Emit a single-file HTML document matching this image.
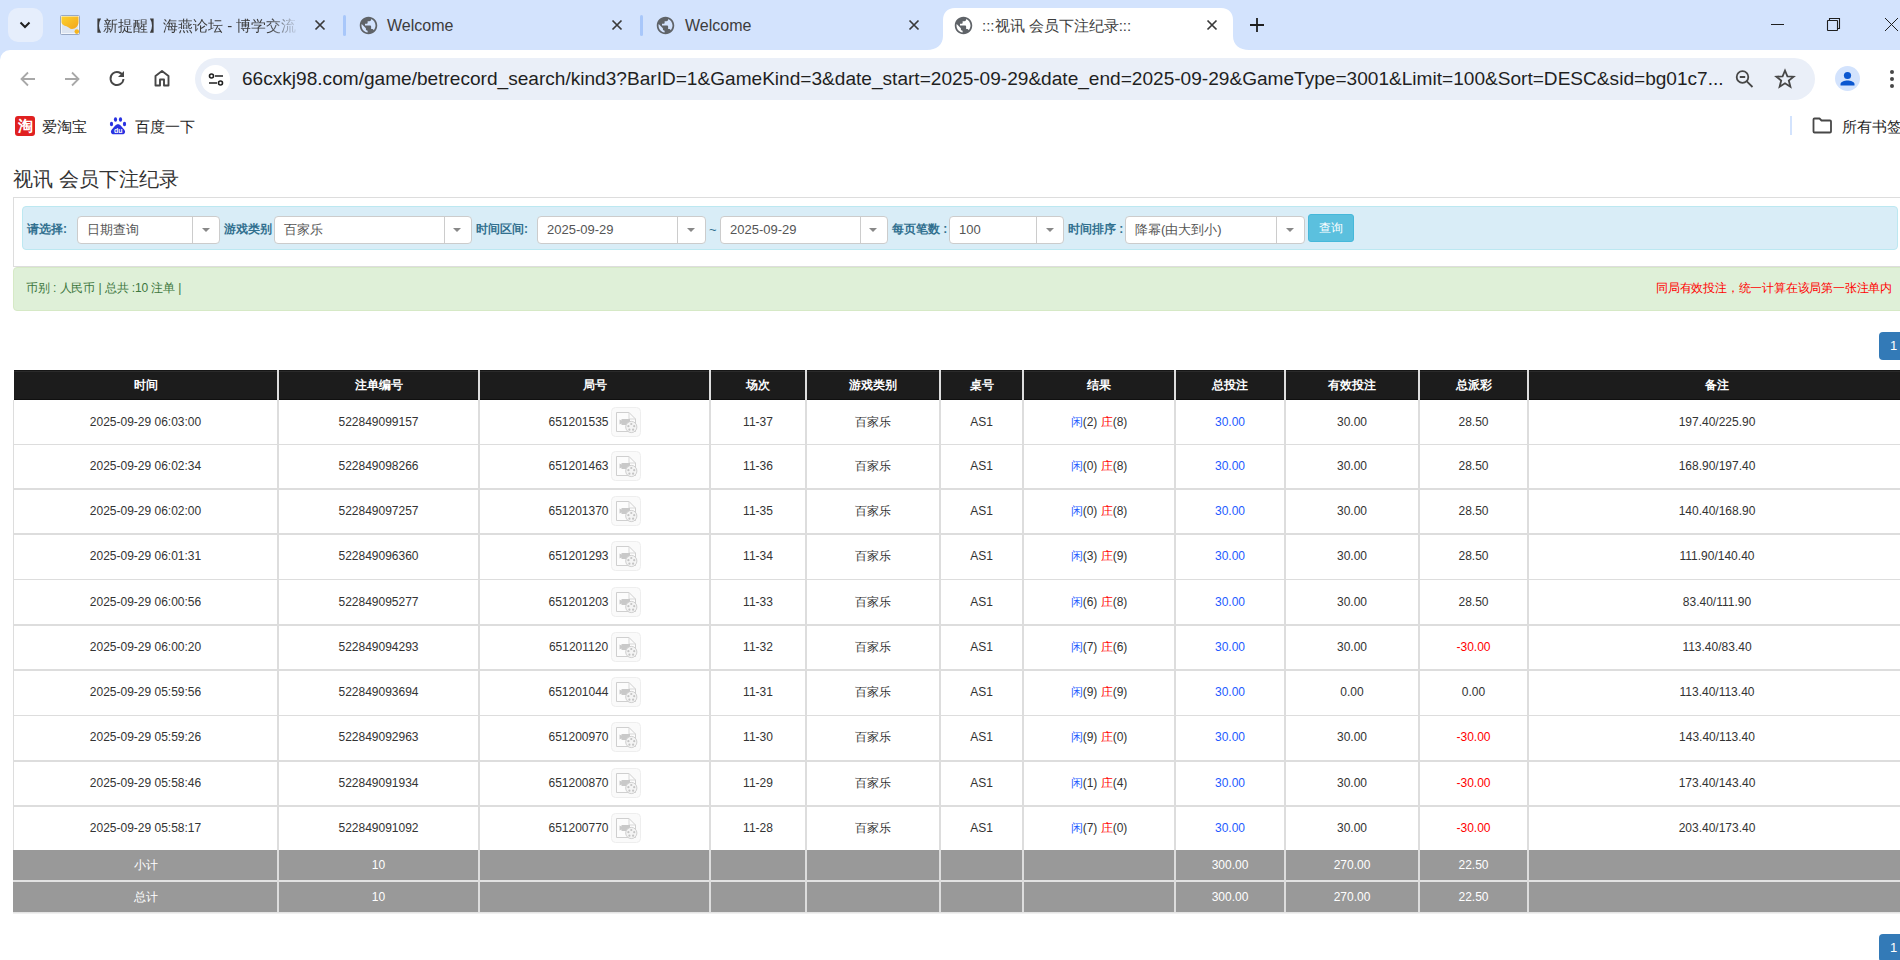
<!DOCTYPE html>
<html><head><meta charset="utf-8">
<style>
*{box-sizing:border-box;margin:0;padding:0}
html,body{width:1900px;height:960px;overflow:hidden;background:#fff;font-family:"Liberation Sans",sans-serif}
.a{position:absolute}
#tabs{left:0;top:0;width:1900px;height:62px;background:#d3e3fd}
#toolbar{left:0;top:50px;width:1900px;height:58px;background:#fff;border-top-left-radius:10px}
.tabt{font-size:16px;color:#3c3c3c;white-space:nowrap;top:16px;line-height:20px}
.sep{width:3px;height:21px;background:#a8c7fa;top:15px;border-radius:1.5px}
#omni{left:195px;top:58px;width:1620px;height:42px;border-radius:21px;background:#eaeff8}
#url{left:242px;top:67px;font-size:19.08px;line-height:24px;color:#1f1f1f;white-space:nowrap}
#bm{left:0;top:108px;width:1900px;height:37px}
.bmt{font-size:15px;color:#1f1f1f;top:117px;line-height:20px;white-space:nowrap}
</style></head><body>
<!-- TAB STRIP -->
<div id="tabs" class="a"></div>
<div class="a" style="left:8px;top:8px;width:35px;height:34px;border-radius:10px;background:#e6eefc"></div>
<svg class="a" style="left:17px;top:17px" width="16" height="16" viewBox="0 0 16 16"><path d="M3.5 5.5 8 10l4.5-4.5" fill="none" stroke="#1f1f1f" stroke-width="2"/></svg>
<!-- tab1 -->
<svg class="a" style="left:60px;top:15px" width="20" height="20" viewBox="0 0 20 20"><defs><linearGradient id="fy" x1="0" y1="0" x2="1" y2="1"><stop offset="0" stop-color="#fcd22e"/><stop offset="1" stop-color="#f2a51e"/></linearGradient></defs><rect x="0.5" y="0.5" width="19" height="19" rx="1" fill="#dde5f1" stroke="#98a9c5"/><rect x="1.5" y="1.5" width="17" height="17" fill="none" stroke="#f3f6fb"/><path d="M1.5 1.5H18.5V7C18.5 11 15.5 14 12 14 9.5 14 8.5 12 6.5 11.3 4 10.5 1.5 9.5 1.5 7z" fill="url(#fy)"/><circle cx="16.8" cy="16.6" r="2.3" fill="#f6b51f"/></svg>
<div class="a tabt" style="left:88px;width:212px;font-size:15px;overflow:hidden;-webkit-mask-image:linear-gradient(90deg,#000 85%,transparent)">【新提醒】海燕论坛 - 博学交流</div>
<svg class="a" style="left:313px;top:18px" width="14" height="14" viewBox="0 0 14 14"><path d="M2.5 2.5 11.5 11.5M11.5 2.5 2.5 11.5" stroke="#3a3a3a" stroke-width="1.7"/></svg>
<div class="a sep" style="left:343px"></div>
<!-- tab2 -->
<svg class="a" style="left:357.5px;top:14.5px" width="21" height="21" viewBox="0 0 24 24"><path d="M12 2C6.48 2 2 6.48 2 12s4.48 10 10 10 10-4.48 10-10S17.52 2 12 2zm-1 17.93c-3.95-.49-7-3.85-7-7.93 0-.62.08-1.21.21-1.79L9 15v1c0 1.1.9 2 2 2v1.93zm6.9-2.54c-.26-.81-1-1.39-1.9-1.39h-1v-3c0-.55-.45-1-1-1H8v-2h2c.55 0 1-.45 1-1V7h2c1.1 0 2-.9 2-2v-.41c2.93 1.19 5 4.06 5 7.41 0 2.08-.8 3.97-2.1 5.39z" fill="#5f6368"/></svg>
<div class="a tabt" style="left:387px">Welcome</div>
<svg class="a" style="left:610px;top:18px" width="14" height="14" viewBox="0 0 14 14"><path d="M2.5 2.5 11.5 11.5M11.5 2.5 2.5 11.5" stroke="#3a3a3a" stroke-width="1.7"/></svg>
<div class="a sep" style="left:640px"></div>
<!-- tab3 -->
<svg class="a" style="left:654.5px;top:14.5px" width="21" height="21" viewBox="0 0 24 24"><path d="M12 2C6.48 2 2 6.48 2 12s4.48 10 10 10 10-4.48 10-10S17.52 2 12 2zm-1 17.93c-3.95-.49-7-3.85-7-7.93 0-.62.08-1.21.21-1.79L9 15v1c0 1.1.9 2 2 2v1.93zm6.9-2.54c-.26-.81-1-1.39-1.9-1.39h-1v-3c0-.55-.45-1-1-1H8v-2h2c.55 0 1-.45 1-1V7h2c1.1 0 2-.9 2-2v-.41c2.93 1.19 5 4.06 5 7.41 0 2.08-.8 3.97-2.1 5.39z" fill="#5f6368"/></svg>
<div class="a tabt" style="left:685px">Welcome</div>
<svg class="a" style="left:907px;top:18px" width="14" height="14" viewBox="0 0 14 14"><path d="M2.5 2.5 11.5 11.5M11.5 2.5 2.5 11.5" stroke="#3a3a3a" stroke-width="1.7"/></svg>
<!-- active tab -->
<svg class="a" style="left:927px;top:8px" width="322" height="42" viewBox="0 0 322 42"><path d="M0 42c9 0 16-5 16-14V12C16 5 20 0 28 0h266c8 0 12 5 12 12v16c0 9 7 14 16 14z" fill="#fff"/></svg>
<svg class="a" style="left:952.5px;top:14.5px" width="21" height="21" viewBox="0 0 24 24"><path d="M12 2C6.48 2 2 6.48 2 12s4.48 10 10 10 10-4.48 10-10S17.52 2 12 2zm-1 17.93c-3.95-.49-7-3.85-7-7.93 0-.62.08-1.21.21-1.79L9 15v1c0 1.1.9 2 2 2v1.93zm6.9-2.54c-.26-.81-1-1.39-1.9-1.39h-1v-3c0-.55-.45-1-1-1H8v-2h2c.55 0 1-.45 1-1V7h2c1.1 0 2-.9 2-2v-.41c2.93 1.19 5 4.06 5 7.41 0 2.08-.8 3.97-2.1 5.39z" fill="#5f6368"/></svg>
<div class="a tabt" style="left:982px;font-size:15px">:::视讯 会员下注纪录:::</div>
<svg class="a" style="left:1205px;top:18px" width="14" height="14" viewBox="0 0 14 14"><path d="M2.5 2.5 11.5 11.5M11.5 2.5 2.5 11.5" stroke="#3a3a3a" stroke-width="1.7"/></svg>
<svg class="a" style="left:1249px;top:17px" width="16" height="16" viewBox="0 0 16 16"><path d="M8 1v14M1 8h14" stroke="#1f1f1f" stroke-width="1.8"/></svg>
<!-- window controls -->
<div class="a" style="left:1771px;top:24px;width:13px;height:1px;background:#1f1f1f"></div>
<svg class="a" style="left:1826px;top:17px" width="16" height="16" viewBox="0 0 16 16"><rect x="1.5" y="3.5" width="10" height="10" rx="0.5" fill="none" stroke="#1f1f1f" stroke-width="1.1"/><path d="M3.5 3.5V1.5h10v10h-2" fill="none" stroke="#1f1f1f" stroke-width="1.1"/></svg>
<svg class="a" style="left:1884px;top:17px" width="15" height="15" viewBox="0 0 15 15"><path d="M1 1 14 14M14 1 1 14" stroke="#1f1f1f" stroke-width="1"/></svg>

<!-- TOOLBAR -->
<div id="toolbar" class="a"></div>
<svg class="a" style="left:18px;top:69px" width="20" height="20" viewBox="0 0 20 20"><path d="M17 10H4M10 3.5 3.5 10 10 16.5" fill="none" stroke="#a8a8a8" stroke-width="1.8"/></svg>
<svg class="a" style="left:62px;top:69px" width="20" height="20" viewBox="0 0 20 20"><path d="M3 10h13M10 3.5 16.5 10 10 16.5" fill="none" stroke="#a8a8a8" stroke-width="1.8"/></svg>
<svg class="a" style="left:107px;top:68px" width="20" height="20" viewBox="0 0 20 20"><path d="M16.2 8.5A6.5 6.5 0 1 0 16.5 11" fill="none" stroke="#474747" stroke-width="1.9"/><path d="M17 3v6h-6z" fill="#474747"/></svg>
<svg class="a" style="left:152px;top:68px" width="20" height="20" viewBox="0 0 20 20"><path d="M3.5 17.5V8L10 3l6.5 5v9.5h-4.5v-6h-4v6z" fill="none" stroke="#474747" stroke-width="1.9" stroke-linejoin="round"/></svg>
<div id="omni" class="a"></div>
<div class="a" style="left:201px;top:65px;width:29px;height:29px;border-radius:50%;background:#fff"></div>
<svg class="a" style="left:207px;top:71px" width="18" height="18" viewBox="0 0 18 18"><circle cx="4.5" cy="5" r="2" fill="none" stroke="#1f1f1f" stroke-width="1.6"/><path d="M8 5h8M2 12h8" stroke="#1f1f1f" stroke-width="1.6"/><circle cx="13.5" cy="12" r="2" fill="none" stroke="#1f1f1f" stroke-width="1.6"/></svg>
<div id="url" class="a">66cxkj98.com/game/betrecord_search/kind3?BarID=1&amp;GameKind=3&amp;date_start=2025-09-29&amp;date_end=2025-09-29&amp;GameType=3001&amp;Limit=100&amp;Sort=DESC&amp;sid=bg01c7...</div>
<svg class="a" style="left:1735px;top:69px" width="20" height="20" viewBox="0 0 20 20"><circle cx="7.5" cy="8" r="5.8" fill="none" stroke="#474747" stroke-width="1.8"/><path d="M4.8 8h5.4M11.8 12.3 17.5 18" stroke="#474747" stroke-width="1.8"/></svg>
<svg class="a" style="left:1774px;top:68px" width="22" height="22" viewBox="0 0 22 22"><path d="M11 2.5 13.4 8.3 19.6 8.7 14.8 12.6 16.4 18.7 11 15.3 5.6 18.7 7.2 12.6 2.4 8.7 8.6 8.3z" fill="none" stroke="#474747" stroke-width="1.8" stroke-linejoin="miter"/></svg>
<div class="a" style="left:1835px;top:66px;width:25px;height:25px;border-radius:50%;background:#d3e3fd"></div>
<svg class="a" style="left:1835px;top:66px" width="25" height="25" viewBox="0 0 25 25"><circle cx="12.5" cy="9.5" r="3.6" fill="#0b57d0"/><path d="M5.5 19.5v-1.5c0-2 4-3.4 7-3.4s7 1.4 7 3.4v1.5z" fill="#0b57d0"/></svg>
<div class="a" style="left:1890px;top:70px;width:4px;height:4px;border-radius:50%;background:#474747"></div>
<div class="a" style="left:1890px;top:77px;width:4px;height:4px;border-radius:50%;background:#474747"></div>
<div class="a" style="left:1890px;top:84px;width:4px;height:4px;border-radius:50%;background:#474747"></div>

<!-- BOOKMARKS -->
<div class="a" style="left:15px;top:116px;width:20px;height:20px;border-radius:3px;background:#e02020;color:#fff;font-size:15px;line-height:20px;text-align:center;font-weight:bold">淘</div>
<div class="a bmt" style="left:42px">爱淘宝</div>
<svg class="a" style="left:109px;top:116px" width="18" height="19" viewBox="0 0 18 19"><ellipse cx="6.5" cy="3.5" rx="1.6" ry="2.2" fill="#2932e1"/><ellipse cx="11.5" cy="3.5" rx="1.6" ry="2.2" fill="#2932e1"/><ellipse cx="2.5" cy="8" rx="1.6" ry="2.2" fill="#2932e1"/><ellipse cx="15.5" cy="8" rx="1.6" ry="2.2" fill="#2932e1"/><path d="M9 8.3c-2.6 0-3.6 2.6-5.2 4.1-1.2 1.1-1.9 2.2-1.9 3.3 0 1.6 1.3 2.6 3 2.6h8.2c1.7 0 3-1 3-2.6 0-1.1-.7-2.2-1.9-3.3-1.6-1.5-2.6-4.1-5.2-4.1z" fill="#2932e1"/><text x="9.2" y="17" font-size="7" font-weight="bold" fill="#fff" text-anchor="middle" font-family="Liberation Sans">du</text></svg>
<div class="a bmt" style="left:135px">百度一下</div>
<div class="a" style="left:1790px;top:116px;width:2px;height:19px;background:#d3e3fd"></div>
<svg class="a" style="left:1812px;top:117px" width="21" height="17" viewBox="0 0 21 17"><path d="M1.5 2.5c0-.6.4-1 1-1h5l2 2h8.5c.6 0 1 .4 1 1v10c0 .6-.4 1-1 1h-15.5c-.6 0-1-.4-1-1z" fill="none" stroke="#474747" stroke-width="1.8" stroke-linejoin="round"/></svg>
<div class="a bmt" style="left:1842px">所有书签</div>



<style>
.t{position:absolute;white-space:nowrap}
#ttl{left:13px;top:166px;font-size:20px;line-height:26px;color:#333}
.lab{font-size:12px;font-weight:bold;color:#31708f;line-height:14px;top:222px}
.sel{position:absolute;top:216px;height:28px;background:#fff;border:1px solid #ccc;border-radius:4px}
.sel .dv{position:absolute;top:0;bottom:0;width:1px;background:#ccc}
.sel .car{position:absolute;top:11px;width:0;height:0;border-left:4px solid transparent;border-right:4px solid transparent;border-top:4px solid #888}
.sel .v{position:absolute;top:5px;font-size:13px;line-height:15px;color:#555;white-space:nowrap}
.hd{font-size:12px;font-weight:bold;color:#fff;line-height:14px;text-align:center}
.cell{font-size:12px;color:#333;line-height:14px;text-align:center}
.ft{font-size:12px;color:#fff;line-height:14px;text-align:center}
.hl{position:absolute;left:13px;width:1892px;background:#ddd}
.vl{position:absolute;width:2px;background:#ddd}
.blue{color:#1e5bff}
.red{color:#f00}
.vid{position:absolute;width:29px;height:29px;border:1px solid #eee;border-radius:4px;background:#fafafa}
.pg{position:absolute;left:1879px;width:30px;height:28px;background:#337ab7;border-radius:4px 0 0 4px;color:#fff;font-size:13px;line-height:28px;padding-left:11px}
</style>

<div class="t" id="ttl">视讯 会员下注纪录</div>
<div class="a" style="left:13px;top:197px;width:1900px;height:70px;border:1px solid #ddd;border-right:none"></div>
<div class="a" style="left:22px;top:206px;width:1876px;height:44px;background:#d9edf7;border:1px solid #bce8f1;border-radius:4px"></div>
<div class="t lab" style="left:27px">请选择:</div>
<div class="t lab" style="left:224px">游戏类别</div>
<div class="t lab" style="left:476px">时间区间:</div>
<div class="t lab" style="left:892px">每页笔数 :</div>
<div class="t lab" style="left:1068px">时间排序 :</div>
<div class="t" style="left:709px;top:222px;font-size:13px;color:#31708f;line-height:15px">~</div>
<div class="sel" style="left:77px;width:143px"><div class="v" style="left:9px">日期查询</div><div class="dv" style="left:114px"></div><div class="car" style="left:124px"></div></div>
<div class="sel" style="left:274px;width:198px"><div class="v" style="left:9px">百家乐</div><div class="dv" style="left:169px"></div><div class="car" style="left:178px"></div></div>
<div class="sel" style="left:537px;width:169px"><div class="v" style="left:9px">2025-09-29</div><div class="dv" style="left:139px"></div><div class="car" style="left:149px"></div></div>
<div class="sel" style="left:720px;width:168px"><div class="v" style="left:9px">2025-09-29</div><div class="dv" style="left:139px"></div><div class="car" style="left:148px"></div></div>
<div class="sel" style="left:949px;width:115px"><div class="v" style="left:9px">100</div><div class="dv" style="left:86px"></div><div class="car" style="left:96px"></div></div>
<div class="sel" style="left:1125px;width:180px"><div class="v" style="left:9px">降幂(由大到小)</div><div class="dv" style="left:150px"></div><div class="car" style="left:160px"></div></div>
<div class="a" style="left:1308px;top:214px;width:46px;height:28px;background:#5bc0de;border:1px solid #46b8da;border-radius:3px;color:#fff;font-size:12px;line-height:26px;text-align:center">查询</div>
<div class="a" style="left:13px;top:267px;width:1900px;height:44px;background:#dff0d8;border:1px solid #d6e9c6;border-radius:4px"></div>
<div class="t" style="left:26px;top:281px;font-size:12px;letter-spacing:-0.1px;line-height:14px;color:#3c763d">币别 : 人民币 | 总共 :10 注单 |</div>
<div class="t" style="left:1656px;top:281px;font-size:12px;letter-spacing:-0.2px;line-height:14px;color:#f00">同局有效投注，统一计算在该局第一张注单内</div>
<div class="pg" style="top:332px">1</div>
<div class="a" style="left:14px;top:370px;width:1891px;height:30px;background:#1c1c1c;border-top:1px solid #161616;border-bottom:1px solid #101010"></div>
<div class="a" style="left:14px;top:371px;width:1891px;height:1px;background:#2a2a2a"></div>
<div class="t hd" style="left:14px;width:263px;top:378px">时间</div>
<div class="t hd" style="left:279px;width:199px;top:378px">注单编号</div>
<div class="t hd" style="left:480px;width:229px;top:378px">局号</div>
<div class="t hd" style="left:711px;width:94px;top:378px">场次</div>
<div class="t hd" style="left:807px;width:132px;top:378px">游戏类别</div>
<div class="t hd" style="left:941px;width:81px;top:378px">桌号</div>
<div class="t hd" style="left:1024px;width:150px;top:378px">结果</div>
<div class="t hd" style="left:1176px;width:108px;top:378px">总投注</div>
<div class="t hd" style="left:1286px;width:132px;top:378px">有效投注</div>
<div class="t hd" style="left:1420px;width:107px;top:378px">总派彩</div>
<div class="t hd" style="left:1529px;width:376px;top:378px">备注</div>
<div class="hl" style="top:444px;height:1px"></div>
<div class="hl" style="top:488px;height:2px"></div>
<div class="hl" style="top:533px;height:2px"></div>
<div class="hl" style="top:579px;height:1px"></div>
<div class="hl" style="top:624px;height:2px"></div>
<div class="hl" style="top:669px;height:2px"></div>
<div class="hl" style="top:715px;height:1px"></div>
<div class="hl" style="top:760px;height:2px"></div>
<div class="hl" style="top:805px;height:2px"></div>
<div class="a" style="left:13px;top:400px;width:1px;height:450px;background:#ddd"></div>
<div class="t cell" style="left:14px;width:263px;top:415px">2025-09-29 06:03:00</div>
<div class="t cell" style="left:279px;width:199px;top:415px">522849099157</div>
<div class="t cell" style="left:480px;width:229px;top:415px;padding-right:32px">651201535</div>
<svg class="a" style="left:611px;top:407px" width="30" height="30" viewBox="0 0 30 30"><rect x="0.5" y="0.5" width="29" height="29" rx="4" fill="#fafafa" stroke="#eee"/><path d="M5.5 5.5h12.5l6.5 6.5v12.5h-19z" fill="#fcfcfc" stroke="#cfcfcf"/><path d="M18 5.5v6.5h6.5" fill="none" stroke="#d8d8d8"/><path d="M8.5 12.5l2 1v-1.5h8.5v6h-8.5v-1.5l-2 1z" fill="#c9c9c9"/><circle cx="20.3" cy="20" r="5.6" fill="#f4f4f4" stroke="#cfcfcf"/><circle cx="20.3" cy="17" r="1.1" fill="#c4c4c4"/><circle cx="23.2" cy="19.2" r="1.1" fill="#c4c4c4"/><circle cx="22.1" cy="22.7" r="1.1" fill="#c4c4c4"/><circle cx="18.4" cy="22.7" r="1.1" fill="#c4c4c4"/><circle cx="17.4" cy="19.2" r="1.1" fill="#c4c4c4"/></svg>
<div class="t cell" style="left:711px;width:94px;top:415px">11-37</div>
<div class="t cell" style="left:807px;width:132px;top:415px">百家乐</div>
<div class="t cell" style="left:941px;width:81px;top:415px">AS1</div>
<div class="t cell" style="left:1024px;width:150px;top:415px"><span class="blue">闲</span>(2) <span class="red">庄</span>(8)</div>
<div class="t cell" style="left:1176px;width:108px;top:415px"><span class="blue">30.00</span></div>
<div class="t cell" style="left:1286px;width:132px;top:415px">30.00</div>
<div class="t cell" style="left:1420px;width:107px;top:415px">28.50</div>
<div class="t cell" style="left:1529px;width:376px;top:415px">197.40/225.90</div>
<div class="t cell" style="left:14px;width:263px;top:459px">2025-09-29 06:02:34</div>
<div class="t cell" style="left:279px;width:199px;top:459px">522849098266</div>
<div class="t cell" style="left:480px;width:229px;top:459px;padding-right:32px">651201463</div>
<svg class="a" style="left:611px;top:451px" width="30" height="30" viewBox="0 0 30 30"><rect x="0.5" y="0.5" width="29" height="29" rx="4" fill="#fafafa" stroke="#eee"/><path d="M5.5 5.5h12.5l6.5 6.5v12.5h-19z" fill="#fcfcfc" stroke="#cfcfcf"/><path d="M18 5.5v6.5h6.5" fill="none" stroke="#d8d8d8"/><path d="M8.5 12.5l2 1v-1.5h8.5v6h-8.5v-1.5l-2 1z" fill="#c9c9c9"/><circle cx="20.3" cy="20" r="5.6" fill="#f4f4f4" stroke="#cfcfcf"/><circle cx="20.3" cy="17" r="1.1" fill="#c4c4c4"/><circle cx="23.2" cy="19.2" r="1.1" fill="#c4c4c4"/><circle cx="22.1" cy="22.7" r="1.1" fill="#c4c4c4"/><circle cx="18.4" cy="22.7" r="1.1" fill="#c4c4c4"/><circle cx="17.4" cy="19.2" r="1.1" fill="#c4c4c4"/></svg>
<div class="t cell" style="left:711px;width:94px;top:459px">11-36</div>
<div class="t cell" style="left:807px;width:132px;top:459px">百家乐</div>
<div class="t cell" style="left:941px;width:81px;top:459px">AS1</div>
<div class="t cell" style="left:1024px;width:150px;top:459px"><span class="blue">闲</span>(0) <span class="red">庄</span>(8)</div>
<div class="t cell" style="left:1176px;width:108px;top:459px"><span class="blue">30.00</span></div>
<div class="t cell" style="left:1286px;width:132px;top:459px">30.00</div>
<div class="t cell" style="left:1420px;width:107px;top:459px">28.50</div>
<div class="t cell" style="left:1529px;width:376px;top:459px">168.90/197.40</div>
<div class="t cell" style="left:14px;width:263px;top:504px">2025-09-29 06:02:00</div>
<div class="t cell" style="left:279px;width:199px;top:504px">522849097257</div>
<div class="t cell" style="left:480px;width:229px;top:504px;padding-right:32px">651201370</div>
<svg class="a" style="left:611px;top:496px" width="30" height="30" viewBox="0 0 30 30"><rect x="0.5" y="0.5" width="29" height="29" rx="4" fill="#fafafa" stroke="#eee"/><path d="M5.5 5.5h12.5l6.5 6.5v12.5h-19z" fill="#fcfcfc" stroke="#cfcfcf"/><path d="M18 5.5v6.5h6.5" fill="none" stroke="#d8d8d8"/><path d="M8.5 12.5l2 1v-1.5h8.5v6h-8.5v-1.5l-2 1z" fill="#c9c9c9"/><circle cx="20.3" cy="20" r="5.6" fill="#f4f4f4" stroke="#cfcfcf"/><circle cx="20.3" cy="17" r="1.1" fill="#c4c4c4"/><circle cx="23.2" cy="19.2" r="1.1" fill="#c4c4c4"/><circle cx="22.1" cy="22.7" r="1.1" fill="#c4c4c4"/><circle cx="18.4" cy="22.7" r="1.1" fill="#c4c4c4"/><circle cx="17.4" cy="19.2" r="1.1" fill="#c4c4c4"/></svg>
<div class="t cell" style="left:711px;width:94px;top:504px">11-35</div>
<div class="t cell" style="left:807px;width:132px;top:504px">百家乐</div>
<div class="t cell" style="left:941px;width:81px;top:504px">AS1</div>
<div class="t cell" style="left:1024px;width:150px;top:504px"><span class="blue">闲</span>(0) <span class="red">庄</span>(8)</div>
<div class="t cell" style="left:1176px;width:108px;top:504px"><span class="blue">30.00</span></div>
<div class="t cell" style="left:1286px;width:132px;top:504px">30.00</div>
<div class="t cell" style="left:1420px;width:107px;top:504px">28.50</div>
<div class="t cell" style="left:1529px;width:376px;top:504px">140.40/168.90</div>
<div class="t cell" style="left:14px;width:263px;top:549px">2025-09-29 06:01:31</div>
<div class="t cell" style="left:279px;width:199px;top:549px">522849096360</div>
<div class="t cell" style="left:480px;width:229px;top:549px;padding-right:32px">651201293</div>
<svg class="a" style="left:611px;top:541px" width="30" height="30" viewBox="0 0 30 30"><rect x="0.5" y="0.5" width="29" height="29" rx="4" fill="#fafafa" stroke="#eee"/><path d="M5.5 5.5h12.5l6.5 6.5v12.5h-19z" fill="#fcfcfc" stroke="#cfcfcf"/><path d="M18 5.5v6.5h6.5" fill="none" stroke="#d8d8d8"/><path d="M8.5 12.5l2 1v-1.5h8.5v6h-8.5v-1.5l-2 1z" fill="#c9c9c9"/><circle cx="20.3" cy="20" r="5.6" fill="#f4f4f4" stroke="#cfcfcf"/><circle cx="20.3" cy="17" r="1.1" fill="#c4c4c4"/><circle cx="23.2" cy="19.2" r="1.1" fill="#c4c4c4"/><circle cx="22.1" cy="22.7" r="1.1" fill="#c4c4c4"/><circle cx="18.4" cy="22.7" r="1.1" fill="#c4c4c4"/><circle cx="17.4" cy="19.2" r="1.1" fill="#c4c4c4"/></svg>
<div class="t cell" style="left:711px;width:94px;top:549px">11-34</div>
<div class="t cell" style="left:807px;width:132px;top:549px">百家乐</div>
<div class="t cell" style="left:941px;width:81px;top:549px">AS1</div>
<div class="t cell" style="left:1024px;width:150px;top:549px"><span class="blue">闲</span>(3) <span class="red">庄</span>(9)</div>
<div class="t cell" style="left:1176px;width:108px;top:549px"><span class="blue">30.00</span></div>
<div class="t cell" style="left:1286px;width:132px;top:549px">30.00</div>
<div class="t cell" style="left:1420px;width:107px;top:549px">28.50</div>
<div class="t cell" style="left:1529px;width:376px;top:549px">111.90/140.40</div>
<div class="t cell" style="left:14px;width:263px;top:595px">2025-09-29 06:00:56</div>
<div class="t cell" style="left:279px;width:199px;top:595px">522849095277</div>
<div class="t cell" style="left:480px;width:229px;top:595px;padding-right:32px">651201203</div>
<svg class="a" style="left:611px;top:587px" width="30" height="30" viewBox="0 0 30 30"><rect x="0.5" y="0.5" width="29" height="29" rx="4" fill="#fafafa" stroke="#eee"/><path d="M5.5 5.5h12.5l6.5 6.5v12.5h-19z" fill="#fcfcfc" stroke="#cfcfcf"/><path d="M18 5.5v6.5h6.5" fill="none" stroke="#d8d8d8"/><path d="M8.5 12.5l2 1v-1.5h8.5v6h-8.5v-1.5l-2 1z" fill="#c9c9c9"/><circle cx="20.3" cy="20" r="5.6" fill="#f4f4f4" stroke="#cfcfcf"/><circle cx="20.3" cy="17" r="1.1" fill="#c4c4c4"/><circle cx="23.2" cy="19.2" r="1.1" fill="#c4c4c4"/><circle cx="22.1" cy="22.7" r="1.1" fill="#c4c4c4"/><circle cx="18.4" cy="22.7" r="1.1" fill="#c4c4c4"/><circle cx="17.4" cy="19.2" r="1.1" fill="#c4c4c4"/></svg>
<div class="t cell" style="left:711px;width:94px;top:595px">11-33</div>
<div class="t cell" style="left:807px;width:132px;top:595px">百家乐</div>
<div class="t cell" style="left:941px;width:81px;top:595px">AS1</div>
<div class="t cell" style="left:1024px;width:150px;top:595px"><span class="blue">闲</span>(6) <span class="red">庄</span>(8)</div>
<div class="t cell" style="left:1176px;width:108px;top:595px"><span class="blue">30.00</span></div>
<div class="t cell" style="left:1286px;width:132px;top:595px">30.00</div>
<div class="t cell" style="left:1420px;width:107px;top:595px">28.50</div>
<div class="t cell" style="left:1529px;width:376px;top:595px">83.40/111.90</div>
<div class="t cell" style="left:14px;width:263px;top:640px">2025-09-29 06:00:20</div>
<div class="t cell" style="left:279px;width:199px;top:640px">522849094293</div>
<div class="t cell" style="left:480px;width:229px;top:640px;padding-right:32px">651201120</div>
<svg class="a" style="left:611px;top:632px" width="30" height="30" viewBox="0 0 30 30"><rect x="0.5" y="0.5" width="29" height="29" rx="4" fill="#fafafa" stroke="#eee"/><path d="M5.5 5.5h12.5l6.5 6.5v12.5h-19z" fill="#fcfcfc" stroke="#cfcfcf"/><path d="M18 5.5v6.5h6.5" fill="none" stroke="#d8d8d8"/><path d="M8.5 12.5l2 1v-1.5h8.5v6h-8.5v-1.5l-2 1z" fill="#c9c9c9"/><circle cx="20.3" cy="20" r="5.6" fill="#f4f4f4" stroke="#cfcfcf"/><circle cx="20.3" cy="17" r="1.1" fill="#c4c4c4"/><circle cx="23.2" cy="19.2" r="1.1" fill="#c4c4c4"/><circle cx="22.1" cy="22.7" r="1.1" fill="#c4c4c4"/><circle cx="18.4" cy="22.7" r="1.1" fill="#c4c4c4"/><circle cx="17.4" cy="19.2" r="1.1" fill="#c4c4c4"/></svg>
<div class="t cell" style="left:711px;width:94px;top:640px">11-32</div>
<div class="t cell" style="left:807px;width:132px;top:640px">百家乐</div>
<div class="t cell" style="left:941px;width:81px;top:640px">AS1</div>
<div class="t cell" style="left:1024px;width:150px;top:640px"><span class="blue">闲</span>(7) <span class="red">庄</span>(6)</div>
<div class="t cell" style="left:1176px;width:108px;top:640px"><span class="blue">30.00</span></div>
<div class="t cell" style="left:1286px;width:132px;top:640px">30.00</div>
<div class="t cell" style="left:1420px;width:107px;top:640px"><span class="red">-30.00</span></div>
<div class="t cell" style="left:1529px;width:376px;top:640px">113.40/83.40</div>
<div class="t cell" style="left:14px;width:263px;top:685px">2025-09-29 05:59:56</div>
<div class="t cell" style="left:279px;width:199px;top:685px">522849093694</div>
<div class="t cell" style="left:480px;width:229px;top:685px;padding-right:32px">651201044</div>
<svg class="a" style="left:611px;top:677px" width="30" height="30" viewBox="0 0 30 30"><rect x="0.5" y="0.5" width="29" height="29" rx="4" fill="#fafafa" stroke="#eee"/><path d="M5.5 5.5h12.5l6.5 6.5v12.5h-19z" fill="#fcfcfc" stroke="#cfcfcf"/><path d="M18 5.5v6.5h6.5" fill="none" stroke="#d8d8d8"/><path d="M8.5 12.5l2 1v-1.5h8.5v6h-8.5v-1.5l-2 1z" fill="#c9c9c9"/><circle cx="20.3" cy="20" r="5.6" fill="#f4f4f4" stroke="#cfcfcf"/><circle cx="20.3" cy="17" r="1.1" fill="#c4c4c4"/><circle cx="23.2" cy="19.2" r="1.1" fill="#c4c4c4"/><circle cx="22.1" cy="22.7" r="1.1" fill="#c4c4c4"/><circle cx="18.4" cy="22.7" r="1.1" fill="#c4c4c4"/><circle cx="17.4" cy="19.2" r="1.1" fill="#c4c4c4"/></svg>
<div class="t cell" style="left:711px;width:94px;top:685px">11-31</div>
<div class="t cell" style="left:807px;width:132px;top:685px">百家乐</div>
<div class="t cell" style="left:941px;width:81px;top:685px">AS1</div>
<div class="t cell" style="left:1024px;width:150px;top:685px"><span class="blue">闲</span>(9) <span class="red">庄</span>(9)</div>
<div class="t cell" style="left:1176px;width:108px;top:685px"><span class="blue">30.00</span></div>
<div class="t cell" style="left:1286px;width:132px;top:685px">0.00</div>
<div class="t cell" style="left:1420px;width:107px;top:685px">0.00</div>
<div class="t cell" style="left:1529px;width:376px;top:685px">113.40/113.40</div>
<div class="t cell" style="left:14px;width:263px;top:730px">2025-09-29 05:59:26</div>
<div class="t cell" style="left:279px;width:199px;top:730px">522849092963</div>
<div class="t cell" style="left:480px;width:229px;top:730px;padding-right:32px">651200970</div>
<svg class="a" style="left:611px;top:722px" width="30" height="30" viewBox="0 0 30 30"><rect x="0.5" y="0.5" width="29" height="29" rx="4" fill="#fafafa" stroke="#eee"/><path d="M5.5 5.5h12.5l6.5 6.5v12.5h-19z" fill="#fcfcfc" stroke="#cfcfcf"/><path d="M18 5.5v6.5h6.5" fill="none" stroke="#d8d8d8"/><path d="M8.5 12.5l2 1v-1.5h8.5v6h-8.5v-1.5l-2 1z" fill="#c9c9c9"/><circle cx="20.3" cy="20" r="5.6" fill="#f4f4f4" stroke="#cfcfcf"/><circle cx="20.3" cy="17" r="1.1" fill="#c4c4c4"/><circle cx="23.2" cy="19.2" r="1.1" fill="#c4c4c4"/><circle cx="22.1" cy="22.7" r="1.1" fill="#c4c4c4"/><circle cx="18.4" cy="22.7" r="1.1" fill="#c4c4c4"/><circle cx="17.4" cy="19.2" r="1.1" fill="#c4c4c4"/></svg>
<div class="t cell" style="left:711px;width:94px;top:730px">11-30</div>
<div class="t cell" style="left:807px;width:132px;top:730px">百家乐</div>
<div class="t cell" style="left:941px;width:81px;top:730px">AS1</div>
<div class="t cell" style="left:1024px;width:150px;top:730px"><span class="blue">闲</span>(9) <span class="red">庄</span>(0)</div>
<div class="t cell" style="left:1176px;width:108px;top:730px"><span class="blue">30.00</span></div>
<div class="t cell" style="left:1286px;width:132px;top:730px">30.00</div>
<div class="t cell" style="left:1420px;width:107px;top:730px"><span class="red">-30.00</span></div>
<div class="t cell" style="left:1529px;width:376px;top:730px">143.40/113.40</div>
<div class="t cell" style="left:14px;width:263px;top:776px">2025-09-29 05:58:46</div>
<div class="t cell" style="left:279px;width:199px;top:776px">522849091934</div>
<div class="t cell" style="left:480px;width:229px;top:776px;padding-right:32px">651200870</div>
<svg class="a" style="left:611px;top:768px" width="30" height="30" viewBox="0 0 30 30"><rect x="0.5" y="0.5" width="29" height="29" rx="4" fill="#fafafa" stroke="#eee"/><path d="M5.5 5.5h12.5l6.5 6.5v12.5h-19z" fill="#fcfcfc" stroke="#cfcfcf"/><path d="M18 5.5v6.5h6.5" fill="none" stroke="#d8d8d8"/><path d="M8.5 12.5l2 1v-1.5h8.5v6h-8.5v-1.5l-2 1z" fill="#c9c9c9"/><circle cx="20.3" cy="20" r="5.6" fill="#f4f4f4" stroke="#cfcfcf"/><circle cx="20.3" cy="17" r="1.1" fill="#c4c4c4"/><circle cx="23.2" cy="19.2" r="1.1" fill="#c4c4c4"/><circle cx="22.1" cy="22.7" r="1.1" fill="#c4c4c4"/><circle cx="18.4" cy="22.7" r="1.1" fill="#c4c4c4"/><circle cx="17.4" cy="19.2" r="1.1" fill="#c4c4c4"/></svg>
<div class="t cell" style="left:711px;width:94px;top:776px">11-29</div>
<div class="t cell" style="left:807px;width:132px;top:776px">百家乐</div>
<div class="t cell" style="left:941px;width:81px;top:776px">AS1</div>
<div class="t cell" style="left:1024px;width:150px;top:776px"><span class="blue">闲</span>(1) <span class="red">庄</span>(4)</div>
<div class="t cell" style="left:1176px;width:108px;top:776px"><span class="blue">30.00</span></div>
<div class="t cell" style="left:1286px;width:132px;top:776px">30.00</div>
<div class="t cell" style="left:1420px;width:107px;top:776px"><span class="red">-30.00</span></div>
<div class="t cell" style="left:1529px;width:376px;top:776px">173.40/143.40</div>
<div class="t cell" style="left:14px;width:263px;top:821px">2025-09-29 05:58:17</div>
<div class="t cell" style="left:279px;width:199px;top:821px">522849091092</div>
<div class="t cell" style="left:480px;width:229px;top:821px;padding-right:32px">651200770</div>
<svg class="a" style="left:611px;top:813px" width="30" height="30" viewBox="0 0 30 30"><rect x="0.5" y="0.5" width="29" height="29" rx="4" fill="#fafafa" stroke="#eee"/><path d="M5.5 5.5h12.5l6.5 6.5v12.5h-19z" fill="#fcfcfc" stroke="#cfcfcf"/><path d="M18 5.5v6.5h6.5" fill="none" stroke="#d8d8d8"/><path d="M8.5 12.5l2 1v-1.5h8.5v6h-8.5v-1.5l-2 1z" fill="#c9c9c9"/><circle cx="20.3" cy="20" r="5.6" fill="#f4f4f4" stroke="#cfcfcf"/><circle cx="20.3" cy="17" r="1.1" fill="#c4c4c4"/><circle cx="23.2" cy="19.2" r="1.1" fill="#c4c4c4"/><circle cx="22.1" cy="22.7" r="1.1" fill="#c4c4c4"/><circle cx="18.4" cy="22.7" r="1.1" fill="#c4c4c4"/><circle cx="17.4" cy="19.2" r="1.1" fill="#c4c4c4"/></svg>
<div class="t cell" style="left:711px;width:94px;top:821px">11-28</div>
<div class="t cell" style="left:807px;width:132px;top:821px">百家乐</div>
<div class="t cell" style="left:941px;width:81px;top:821px">AS1</div>
<div class="t cell" style="left:1024px;width:150px;top:821px"><span class="blue">闲</span>(7) <span class="red">庄</span>(0)</div>
<div class="t cell" style="left:1176px;width:108px;top:821px"><span class="blue">30.00</span></div>
<div class="t cell" style="left:1286px;width:132px;top:821px">30.00</div>
<div class="t cell" style="left:1420px;width:107px;top:821px"><span class="red">-30.00</span></div>
<div class="t cell" style="left:1529px;width:376px;top:821px">203.40/173.40</div>
<div class="a" style="left:13px;top:850px;width:1892px;height:30px;background:#999"></div>
<div class="a" style="left:13px;top:882px;width:1892px;height:30px;background:#999"></div>
<div class="a" style="left:13px;top:880px;width:1892px;height:2px;background:#e2e2e2"></div>
<div class="a" style="left:13px;top:912px;width:1892px;height:2px;background:linear-gradient(#ddd,#f6f6f6)"></div>
<div class="vl" style="left:277px;top:370px;height:542px"></div>
<div class="vl" style="left:478px;top:370px;height:542px"></div>
<div class="vl" style="left:709px;top:370px;height:542px"></div>
<div class="vl" style="left:805px;top:370px;height:542px"></div>
<div class="vl" style="left:939px;top:370px;height:542px"></div>
<div class="vl" style="left:1022px;top:370px;height:542px"></div>
<div class="vl" style="left:1174px;top:370px;height:542px"></div>
<div class="vl" style="left:1284px;top:370px;height:542px"></div>
<div class="vl" style="left:1418px;top:370px;height:542px"></div>
<div class="vl" style="left:1527px;top:370px;height:542px"></div>
<div class="t ft" style="left:14px;width:263px;top:858px;font-weight:normal">小计</div>
<div class="t ft" style="left:279px;width:199px;top:858px;font-weight:normal">10</div>
<div class="t ft" style="left:1176px;width:108px;top:858px;font-weight:normal">300.00</div>
<div class="t ft" style="left:1286px;width:132px;top:858px;font-weight:normal">270.00</div>
<div class="t ft" style="left:1420px;width:107px;top:858px;font-weight:normal">22.50</div>
<div class="t ft" style="left:14px;width:263px;top:890px;font-weight:normal">总计</div>
<div class="t ft" style="left:279px;width:199px;top:890px;font-weight:normal">10</div>
<div class="t ft" style="left:1176px;width:108px;top:890px;font-weight:normal">300.00</div>
<div class="t ft" style="left:1286px;width:132px;top:890px;font-weight:normal">270.00</div>
<div class="t ft" style="left:1420px;width:107px;top:890px;font-weight:normal">22.50</div>
<div class="pg" style="top:934px">1</div>
</body></html>
